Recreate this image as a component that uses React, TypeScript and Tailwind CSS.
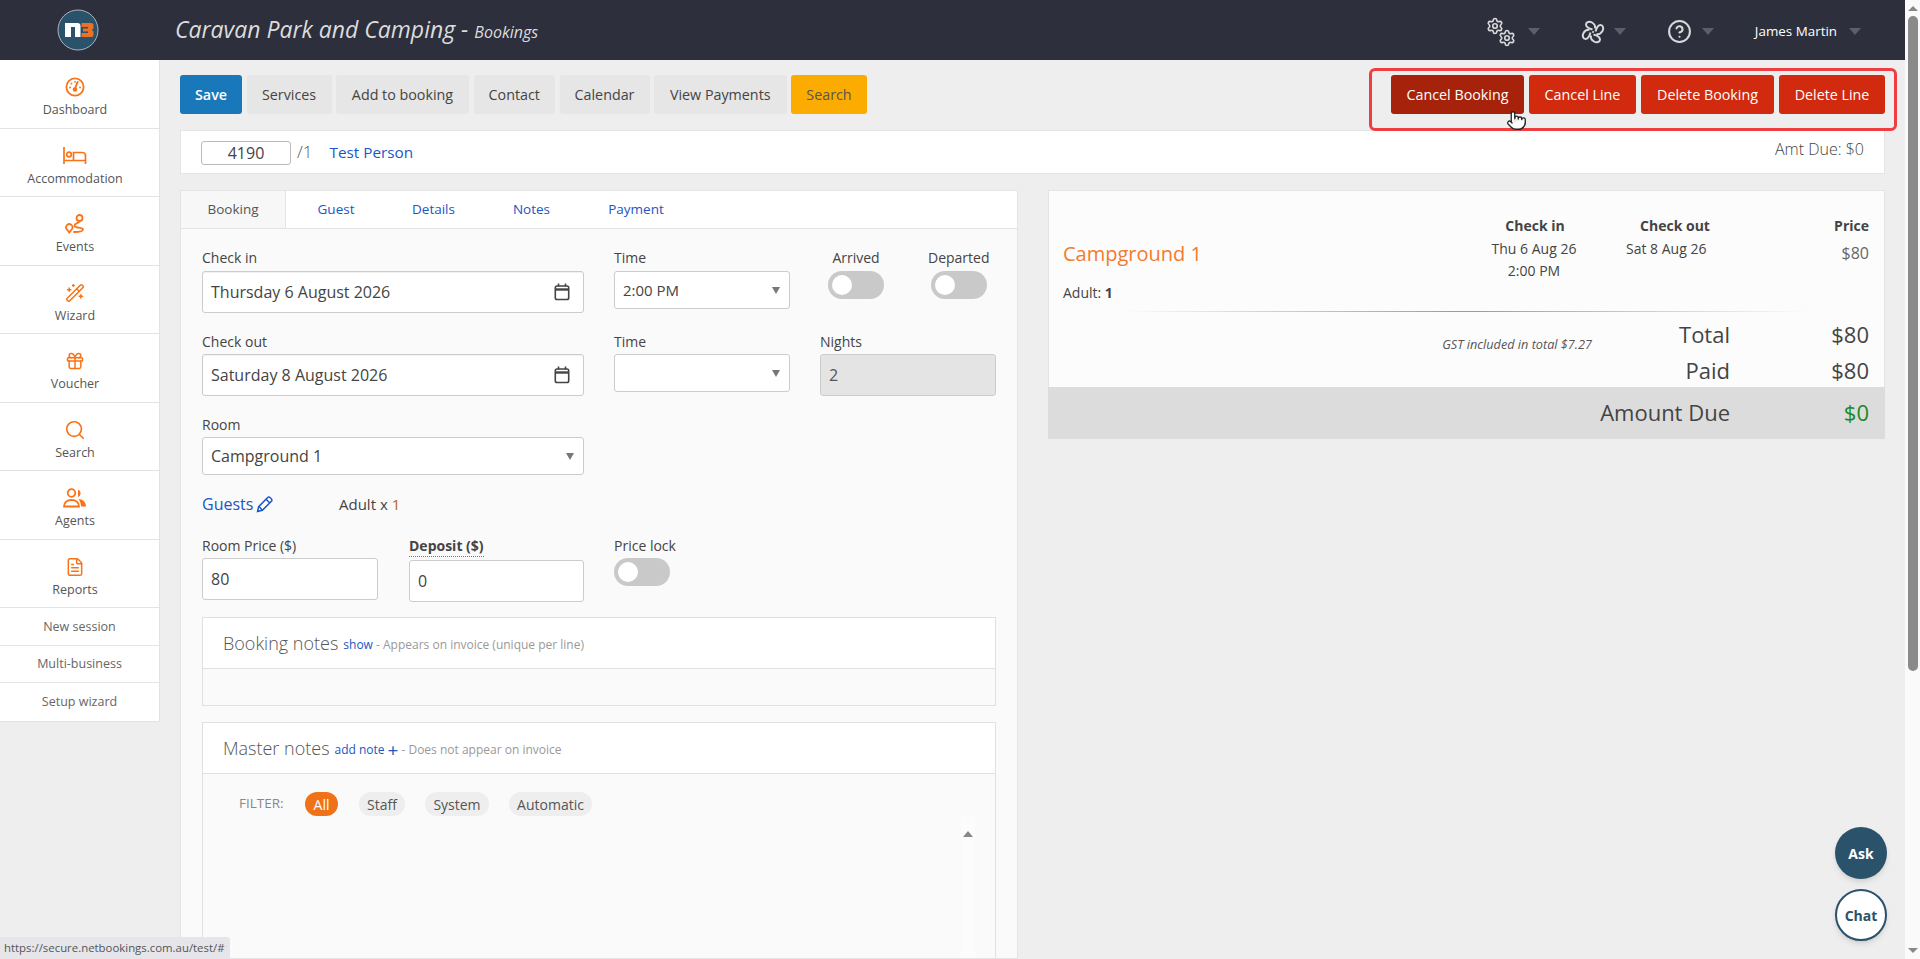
import React from 'react';
import { CircleHelp, FileText, Gift, Pointer, Search, Settings, WandSparkles } from 'lucide-react';

const Caret = ({ className = '' }: { className?: string }) => (
  <span className={`inline-block w-0 h-0 border-l-[6px] border-r-[6px] border-t-[7px] border-l-transparent border-r-transparent border-t-[#5c5e68] ${className}`} />
);

const SmallArrow = () => (
  <span className="w-0 h-0 border-l-[4px] border-r-[4px] border-t-[7px] border-l-transparent border-r-transparent border-t-[#777]" />
);

const GaugeIcon = () => (
  <svg width="20" height="20" viewBox="0 0 20 20" fill="none" stroke="#f97316" strokeWidth="1.8" strokeLinecap="round">
    <circle cx="10" cy="10" r="8.6" />
    <path d="M10 11.5 L12.6 5" strokeWidth="2" />
    <circle cx="10" cy="12.5" r="1.4" fill="#f97316" />
    <path d="M5 10.5h.1M6.4 6.6h.1M10 4.8h.1M15 10.5h.1" strokeWidth="1.8" />
  </svg>
);

const BedIcon = () => (
  <svg width="24" height="20" viewBox="0 0 24 20" fill="none" stroke="#f97316" strokeWidth="1.7">
    <path d="M1 1v17M1 14.5h21.5M22.5 18v-8.5a3 3 0 0 0-3-3H10.5v8" />
    <circle cx="6" cy="8.5" r="2.3" />
  </svg>
);

const RouteIcon = () => (
  <svg width="20" height="20" viewBox="0 0 20 20" fill="none" stroke="#f97316" strokeWidth="1.8" strokeLinecap="round">
    <circle cx="14.5" cy="4" r="3" />
    <path d="M14.5 7.5c-1 2-5 1.5-5 4.2 0 2.8 8.5 1 8.5 3.8 0 2-3 2.5-9 2.5" />
    <path d="M4.3 18.5 1.6 15a3.2 3.2 0 1 1 5.4 0z" />
  </svg>
);

const AgentsIcon = () => (
  <svg width="24" height="20" viewBox="0 0 24 20" fill="none" stroke="#f97316" strokeWidth="1.8">
    <circle cx="8.5" cy="5" r="3.8" />
    <path d="M1 18.5c0-4 3-6.5 7.5-6.5s7.5 2.5 7.5 6.5z" />
    <path d="M15 1.5a4 4 0 0 1 0 7.5z" fill="#f97316" stroke="none" />
    <path d="M15.5 11c4 0 7.5 3 7.5 7.5h-5c0-3-1-5.5-2.5-7.5z" fill="#f97316" stroke="none" />
  </svg>
);

const CalendarIcon = () => (
  <svg width="16" height="18" viewBox="0 0 16 18" fill="none" stroke="#444" strokeWidth="1.6">
    <rect x="1.3" y="3" width="13.4" height="13.5" rx="1.8" />
    <path d="M1.3 6.5h13.4" strokeWidth="2.4" />
    <path d="M4.5 0.5v3M11.5 0.5v3" strokeWidth="1.6" />
  </svg>
);

const PencilIcon = () => (
  <svg width="17" height="17" viewBox="0 0 16 16" fill="none" stroke="#1a56c4" strokeWidth="1.4">
    <path d="M1.5 14.5 2.5 10 11 1.5a1.5 1.5 0 0 1 2.2 0l1.3 1.3a1.5 1.5 0 0 1 0 2.2L6 13.5z" />
    <path d="M9.5 3 13 6.5M3 10l3 3.5" />
  </svg>
);

const PinwheelIcon = () => (
  <svg width="24" height="24" viewBox="0 0 24 24" fill="none" stroke="#d8d8d8" strokeWidth="2" strokeLinejoin="round" className="ml-[41px]">
    {[0, 90, 180, 270].map((deg) => (
      <path key={deg} transform={`rotate(${deg} 12 12)`} d="M11.5 9.5C8 8.5 5 7.5 5 4.5 5 2 8.5 1 11 2.5c2.5 1.5 3.5 4 3 6" />
    ))}
    <circle cx="12" cy="12" r="1" fill="#d8d8d8" stroke="none" />
  </svg>
);

const Logo = () => (
  <svg width="42" height="42" viewBox="0 0 42 42">
    <circle cx="21" cy="21" r="20" fill="#2a526b" stroke="#a9b5bd" strokeWidth="1" />
    <path d="M8 14h12.5a3 3 0 0 1 3 3v11H18V18h-4v10H8z" fill="#fff" />
    <path d="M24.5 14H34a2.5 2.5 0 0 1 2.5 2.5v3L34.8 21l1.7 1.5v3A2.5 2.5 0 0 1 34 28h-9.5v-4H31v-1.500h-5v-3h5V18h-6.5z" fill="#ea7125" />
  </svg>
);

const navItems = [
  { label: 'Dashboard', icon: <GaugeIcon /> },
  { label: 'Accommodation', icon: <BedIcon /> },
  { label: 'Events', icon: <RouteIcon /> },
  { label: 'Wizard', icon: <WandSparkles size={20} color="#f97316" strokeWidth={1.8} /> },
  { label: 'Voucher', icon: <Gift size={20} color="#f97316" strokeWidth={1.8} /> },
  { label: 'Search', icon: <Search size={22} color="#f97316" strokeWidth={1.8} /> },
  { label: 'Agents', icon: <AgentsIcon /> },
  { label: 'Reports', icon: <FileText size={20} color="#f97316" strokeWidth={1.8} /> },
];

const Sidebar = () => (
  <aside className="w-[160px] shrink-0 self-start bg-white border-r border-b border-[#e2e2e2]">
    {navItems.map((item) => (
      <div key={item.label} className="h-[68.5px] flex flex-col items-center border-b border-[#e4e2e6] pt-[16px] pr-[9px]">
        <div className="h-[22px] flex items-center">{item.icon}</div>
        <div className="text-[12.5px] leading-[20px] text-[#555] mt-[2px]">{item.label}</div>
      </div>
    ))}
    {['New session', 'Multi-business', 'Setup wizard'].map((label, i) => (
      <div key={label} className={`h-[37.5px] pt-[2px] flex items-center justify-center text-[12.5px] text-[#666] ${i < 2 ? 'border-b border-[#e4e4e4]' : ''}`}>
        {label}
      </div>
    ))}
  </aside>
);

const ToolButton = ({ label, className }: { label: string; className: string }) => (
  <button className={`h-[39px] pt-px rounded-[3px] text-[14.3px] ${className}`}>{label}</button>
);

const Label = ({ children }: { children: React.ReactNode }) => (
  <div className="h-[20px] leading-[20px] text-[14px] text-[#444]">{children}</div>
);

const DateInput = ({ value }: { value: string }) => (
  <div className="h-[42px] bg-white border border-[#ccc] rounded-[3px] flex items-center justify-between pl-2 pr-[13px] text-[16px] text-[#444] shadow-[inset_0_1px_1px_rgba(0,0,0,0.06)]">
    <span>{value}</span>
    <CalendarIcon />
  </div>
);

const SelectBox = ({ value, large }: { value?: string; large?: boolean }) => (
  <div className={`h-[38px] bg-white border border-[#ccc] rounded-[3px] flex items-center justify-between pl-2 pr-[9px] text-[#444] ${large ? 'text-[16px]' : 'text-[15px]'}`}>
    <span>{value}</span>
    <SmallArrow />
  </div>
);

const Toggle = () => (
  <div className="w-[56px] h-[28px] rounded-full bg-[#c9c9c9] flex items-center pl-1">
    <div className="w-5 h-5 rounded-full bg-white" />
  </div>
);

const NumberInput = ({ value }: { value: string }) => (
  <div className="h-[42px] bg-white border border-[#ccc] rounded-[3px] flex items-center pl-2 text-[16px] text-[#444]">{value}</div>
);

const Pill = ({ label, className }: { label: string; className: string }) => (
  <span className={`h-[24px] rounded-[12px] flex items-center justify-center ${className}`}>{label}</span>
);

const BookingPanel = () => (
  <div className="w-[838px] h-[769px] shrink-0 border border-[#e4e4e4] bg-[#fafafa] overflow-hidden">
    <div className="h-[38px] bg-white border-b border-[#e4e4e4] flex text-[13.5px] text-[#1a56c4]">
      <div className="w-[105px] bg-[#f7f7f7] border-r border-[#e4e4e4] text-[#555] flex items-center justify-center">Booking</div>
      <div className="w-[100px] flex items-center justify-center">Guest</div>
      <div className="w-[95px] flex items-center justify-center">Details</div>
      <div className="w-[101px] flex items-center justify-center">Notes</div>
      <div className="w-[108px] flex items-center justify-center">Payment</div>
    </div>

    <div className="pl-[21px] pr-[21px] pt-[19px]">
      <div className="flex gap-[30px]">
        <div className="w-[382px]">
          <div className="mb-[3px]"><Label>Check in</Label></div>
          <DateInput value="Thursday 6 August 2026" />
        </div>
        <div className="w-[176px]">
          <div className="mb-[3px]"><Label>Time</Label></div>
          <SelectBox value="2:00 PM" />
        </div>
        <div className="flex w-[176px]">
          <div className="w-[111px] pl-[8px]">
            <div className="mb-[3px] w-[56px] flex justify-center"><Label>Arrived</Label></div>
            <Toggle />
          </div>
          <div className="w-[65px]">
            <div className="mb-[3px] -ml-[3px]"><Label>Departed</Label></div>
            <Toggle />
          </div>
        </div>
      </div>

      <div className="flex gap-[30px] mt-[19px]">
        <div className="w-[382px]">
          <div className="mb-[2px]"><Label>Check out</Label></div>
          <DateInput value="Saturday 8 August 2026" />
        </div>
        <div className="w-[176px]">
          <div className="mb-[2px]"><Label>Time</Label></div>
          <SelectBox />
        </div>
        <div className="w-[176px]">
          <div className="mb-[2px]"><Label>Nights</Label></div>
          <div className="h-[42px] bg-[#e4e4e4] border border-[#ccc] rounded-[3px] flex items-center pl-2 text-[16px] text-[#555]">2</div>
        </div>
      </div>

      <div className="w-[382px] mt-[19px]">
        <div className="mb-[2px]"><Label>Room</Label></div>
        <SelectBox value="Campground 1" large />
      </div>

      <div className="flex items-center h-[20px] mt-[19px]">
        <span className="w-[137px] flex items-center gap-[3px] text-[16px] text-[#1a56c4]">Guests <PencilIcon /></span>
        <span className="text-[15px] text-[#444]">Adult x <span className="text-[#b5652a]">1</span></span>
      </div>

      <div className="flex mt-[22px]">
        <div className="w-[176px]">
          <div className="mb-[2px]"><Label>Room Price ($)</Label></div>
          <NumberInput value="80" />
        </div>
        <div className="w-[175px] ml-[31px]">
          <div className="mb-[3px] w-fit font-bold border-b border-dotted border-[#777]"><Label>Deposit ($)</Label></div>
          <NumberInput value="0" />
        </div>
        <div className="ml-[30px]">
          <div className="mb-[2px]"><Label>Price lock</Label></div>
          <Toggle />
        </div>
      </div>

      <div className="mt-[15px] border border-[#e0e0e0]">
        <div className="h-[51px] bg-white border-b border-[#e0e0e0] pl-5 flex items-center gap-[5px]">
          <span className="text-[18px] font-light text-[#555]">Booking notes</span>
          <span className="text-[12px] text-[#999] pt-[4px]"><span className="text-[#1a56c4]">show</span> - Appears on invoice (unique per line)</span>
        </div>
        <div className="h-[36px]" />
      </div>

      <div className="mt-[16px] relative h-[400px] border border-[#e0e0e0]">
        <div className="h-[51px] bg-white border-b border-[#e0e0e0] pl-5 flex items-center gap-[5px]">
          <span className="text-[18px] font-light text-[#555]">Master notes</span>
          <span className="text-[12px] text-[#999] flex items-center gap-[3px] pt-[4px]">
            <span className="text-[#1a56c4]">add note</span>
            <span className="text-[#1a56c4] text-[19px] leading-none">+</span>
            - Does not appear on invoice
          </span>
        </div>
        <div className="flex items-center pl-[36px] pt-[18px] text-[14px] text-[#555]">
          <span className="text-[13.5px] text-[#888] w-[66px] -mt-[1px]">FILTER:</span>
          <Pill label="All" className="w-[33px] bg-[#ef7218] text-white" />
          <Pill label="Staff" className="w-[46px] ml-[21px] bg-[#eeeeee]" />
          <Pill label="System" className="w-[64px] ml-[20px] bg-[#eeeeee]" />
          <Pill label="Automatic" className="w-[83px] ml-[20px] bg-[#eeeeee]" />
        </div>
        <div className="absolute top-[94px] right-[20px] w-[14px] h-[320px] bg-[#fcfcfc] flex justify-center pt-[14px]">
          <span className="w-0 h-0 border-l-[5px] border-r-[5px] border-b-[6px] border-l-transparent border-r-transparent border-b-[#888]" />
        </div>
      </div>
    </div>
  </div>
);

const TotalRow = ({ note, label, value, className }: { note?: string; label: string; value: string; className: string }) => (
  <div className={`flex items-center pr-[15px] text-[22px] text-[#444] ${className}`}>
    <div className="flex-1 text-right text-[12.7px] italic text-[#555] pt-[20px]">{note}</div>
    <div className="w-[138px] text-right">{label}</div>
    <div className="w-[139px] text-right">{value}</div>
  </div>
);

const SummaryPanel = () => (
  <div className="w-[837px] shrink-0 self-start border border-[#e4e4e4] bg-[#fcfcfc] ml-[30px]">
    <div className="flex pl-[14px] pr-[15px] pt-[25px] h-[120px] text-[14px] text-[#444]">
      <div className="flex-1">
        <div className="text-[20px] leading-[28px] text-[#f47a2c] mt-[24px]">Campground 1</div>
        <div className="text-[14px] leading-[20px] mt-[15px]">Adult: <b>1</b></div>
      </div>
      <div className="w-[110px] text-center leading-[22px]">
        <div className="font-bold leading-[20px] mb-[2px]">Check in</div>
        <div className="-ml-[2px]">Thu 6 Aug 26</div>
        <div className="-ml-[2px]">2:00 PM</div>
      </div>
      <div className="w-[100px] ml-[35px] leading-[22px]">
        <div className="font-bold leading-[20px] mb-[2px] text-center">Check out</div>
        <div className="pl-px whitespace-nowrap">Sat 8 Aug 26</div>
      </div>
      <div className="w-[144px] text-right">
        <div className="font-bold leading-[20px] mb-[5px]">Price</div>
        <div className="text-[16px] text-[#666]">$80</div>
      </div>
    </div>
    <div className="h-px mx-[75px] bg-linear-to-r from-transparent via-[#999] to-transparent" />
    <TotalRow note="GST included in total $7.27" label="Total" value="$80" className="h-[37px] mt-[4px]" />
    <TotalRow label="Paid" value="$80" className="h-[34px]" />
    <div className="h-[52px] -mx-px -mb-px pb-[2px] bg-[#dcdcdc] flex items-center justify-end pr-[16px] text-[22px] text-[#444]">
      <span>Amount Due</span>
      <span className="w-[139px] text-right text-[#1b8a1b]">$0</span>
    </div>
  </div>
);

export default function App() {
  return (
    <div className="h-[959px] overflow-hidden flex bg-[#eeeeee] font-['Open_Sans',sans-serif] relative">
      <div className="flex-1 min-w-0 flex flex-col">
        <header className="h-[60px] shrink-0 bg-[#2d2f3c] flex items-center">
          <div className="w-[175px] pl-[57px] shrink-0"><Logo /></div>
          <div className="text-[23px] italic text-[#dcdcdc] -mt-[2px]">
            Caravan Park and Camping - <span className="text-[16px]">Bookings</span>
          </div>
          <div className="ml-auto mt-[3px] flex items-center text-[#d8d8d8]">
            <div className="relative w-[30px] h-[30px]">
              <Settings size={18} strokeWidth={2.2} className="absolute top-0 left-0" />
              <Settings size={18} strokeWidth={2.2} className="absolute bottom-0 right-0" />
            </div>
            <Caret className="ml-[12px]" />
            <PinwheelIcon />
            <Caret className="ml-[9px]" />
            <CircleHelp size={25} strokeWidth={2} className="ml-[41px]" />
            <Caret className="ml-[10px]" />
            <span className="ml-[41px] text-[13.4px] text-white">James Martin</span>
            <Caret className="ml-[12px] mr-[44px]" />
          </div>
        </header>

        <div className="flex flex-1 min-h-0">
          <Sidebar />
          <main className="flex-1 min-w-0 pl-[20px] pt-[15px] pr-[20px]">
            <div className="flex items-center gap-[4.5px]">
              <ToolButton label="Save" className="w-[62px] bg-[#1878b9] text-white font-semibold" />
              <ToolButton label="Services" className="w-[85px] bg-[#e6e6e6] text-[#444]" />
              <ToolButton label="Add to booking" className="w-[133px] bg-[#e6e6e6] text-[#444]" />
              <ToolButton label="Contact" className="w-[81.5px] bg-[#e6e6e6] text-[#444]" />
              <ToolButton label="Calendar" className="w-[90px] bg-[#e6e6e6] text-[#444]" />
              <ToolButton label="View Payments" className="w-[132.5px] bg-[#e6e6e6] text-[#444]" />
              <ToolButton label="Search" className="w-[76px] bg-[#fcac00] text-[#555]" />
              <div className="ml-auto flex items-center gap-[5px]">
                <ToolButton label="Cancel Booking" className="w-[133px] bg-[#a6220a] text-white" />
                <ToolButton label="Cancel Line" className="w-[107px] bg-[#d12a0e] text-white" />
                <ToolButton label="Delete Booking" className="w-[133px] bg-[#d12a0e] text-white" />
                <ToolButton label="Delete Line" className="w-[106px] bg-[#d12a0e] text-white" />
              </div>
            </div>

            <div className="h-[44px] mt-[16px] bg-white border border-[#e4e4e4] flex items-start pl-[20px] pt-[10px]">
              <div className="w-[90px] h-[24px] border border-[#bbb] rounded-[3px] text-center text-[16px] leading-[22px] text-[#444]">4190</div>
              <span className="ml-[6px] text-[17px] leading-[22px] font-light text-[#555]">/1</span>
              <span className="ml-[17px] text-[15.3px] leading-[22px] text-[#1a56c4]">Test Person</span>
              <span className="ml-auto mr-[20px] -mt-[3px] text-[16px] leading-[22px] font-light text-[#444]">Amt Due: $0</span>
            </div>

            <div className="flex mt-[16px]">
              <BookingPanel />
              <SummaryPanel />
            </div>
          </main>
        </div>
      </div>

      <div className="w-[15px] shrink-0 bg-[#fafafa] flex flex-col items-center">
        <span className="mt-[6px] w-0 h-0 border-l-[5px] border-r-[5px] border-b-[5px] border-l-transparent border-r-transparent border-b-[#888]" />
        <div className="mt-[5px] w-[10px] h-[655px] rounded-full bg-[#8a8a8a]" />
        <span className="mt-auto mb-[6px] w-0 h-0 border-l-[5px] border-r-[5px] border-t-[5px] border-l-transparent border-r-transparent border-t-[#888]" />
      </div>

      {/* annotation over the danger buttons */}
      <div className="absolute left-[1369px] top-[68px] w-[528px] h-[63px] border-[3px] border-[#ef3e42] rounded-[6px]" />

      {/* mouse pointer */}
      <Pointer size={21} fill="#fff" color="#222" strokeWidth={1.5} className="absolute left-[1506px] top-[110px]" />

      {/* floating help buttons */}
      <button className="absolute left-[1835px] top-[827px] w-[52px] h-[52px] rounded-full bg-[#2a526b] text-white text-[14px] font-bold shadow-md">Ask</button>
      <button className="absolute left-[1835px] top-[889px] w-[52px] h-[52px] rounded-full bg-white border-2 border-[#2a526b] text-[#2a526b] text-[14px] font-bold shadow-md">Chat</button>

      {/* browser status bar */}
      <div className="absolute left-0 bottom-0 w-[230px] h-[22px] bg-[#e6e6ea] rounded-tr-[3px] pl-1 text-[11.4px] leading-[22px] text-[#555] whitespace-nowrap overflow-hidden">
        https://secure.netbookings.com.au/test/#
      </div>
    </div>
  );
}
